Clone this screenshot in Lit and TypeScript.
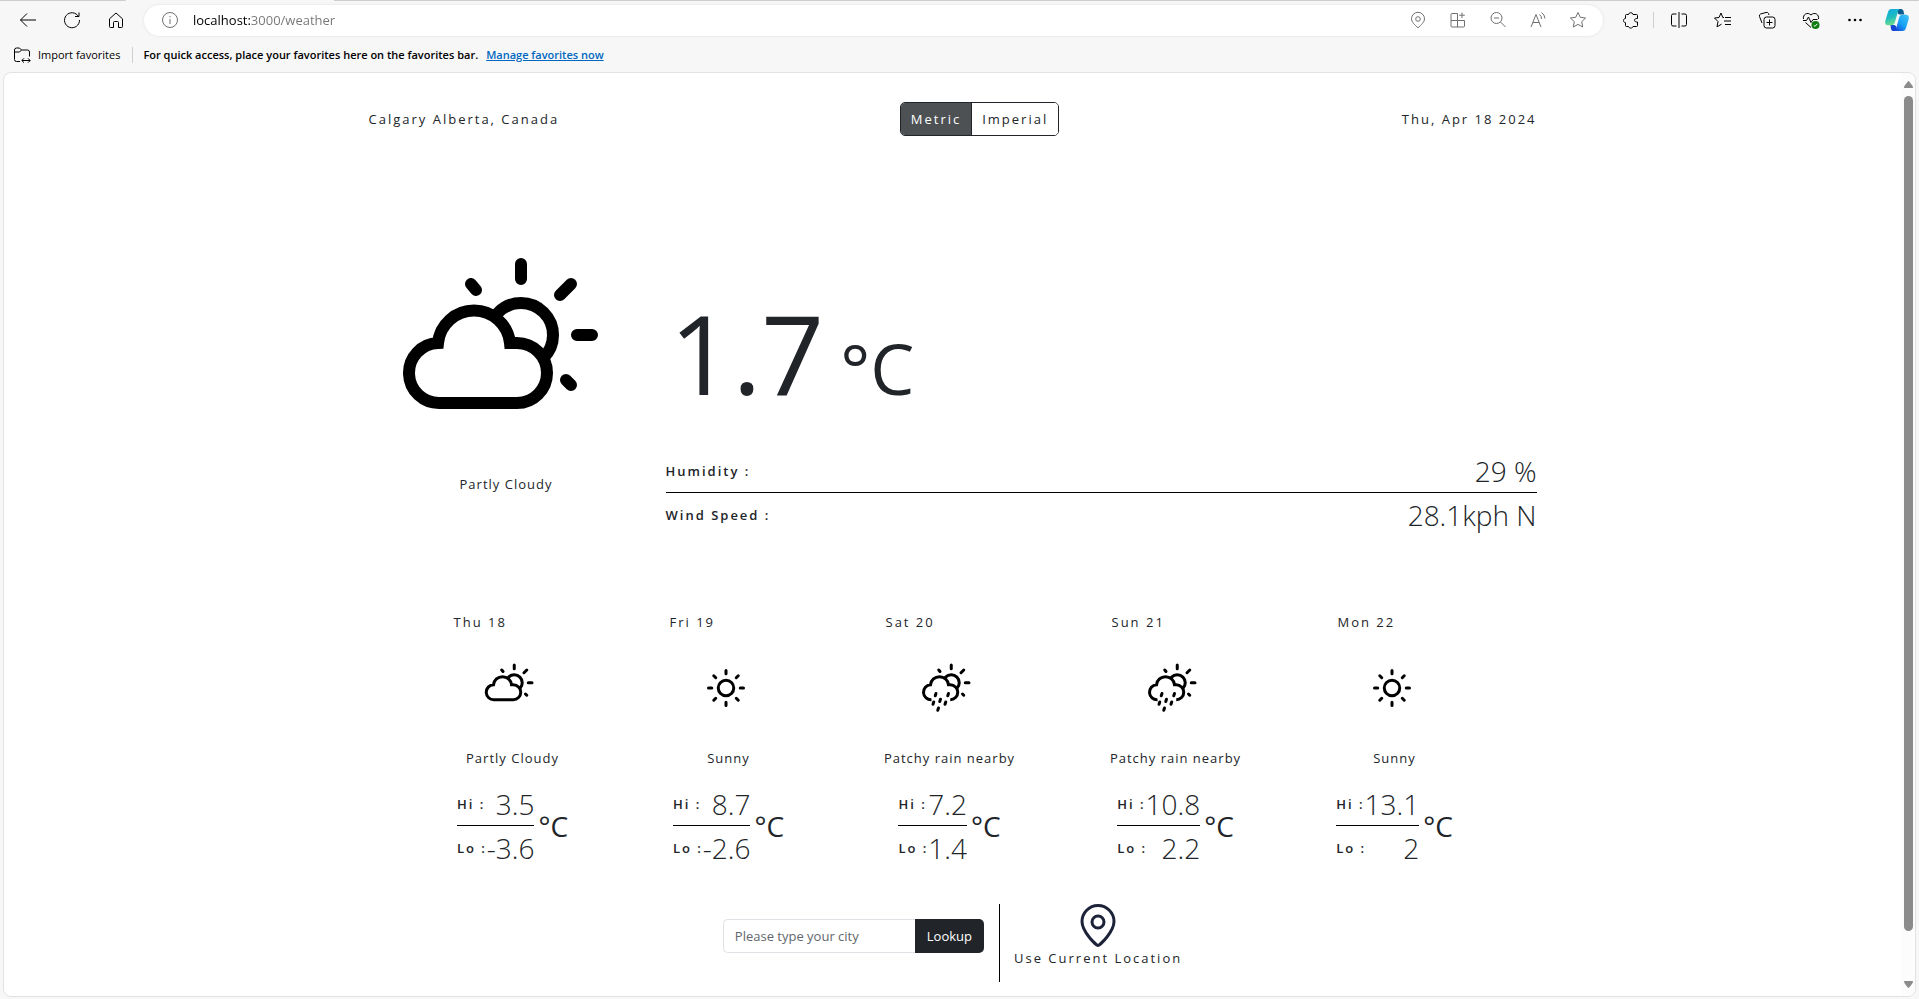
import { LitElement, html, css, svg } from "lit";
import { customElement, property, state } from "lit/decorators.js";
import { classMap } from "lit/directives/class-map.js";

type Condition = "partly" | "sunny" | "rain";

interface Day {
  label: string;
  icon: Condition;
  text: string;
  hi: number;
  lo: number;
}

const DAYS: Day[] = [
  { label: "Thu 18", icon: "partly", text: "Partly Cloudy", hi: 3.5, lo: -3.6 },
  { label: "Fri 19", icon: "sunny", text: "Sunny", hi: 8.7, lo: -2.6 },
  { label: "Sat 20", icon: "rain", text: "Patchy rain nearby", hi: 7.2, lo: 1.4 },
  { label: "Sun 21", icon: "rain", text: "Patchy rain nearby", hi: 10.8, lo: 2.2 },
  { label: "Mon 22", icon: "sunny", text: "Sunny", hi: 13.1, lo: 2 },
];

const toF = (c: number) => Math.round((c * 9) / 5 * 10 + 320) / 10;

/* Weather glyphs on a shared 256-unit grid. */
@customElement("weather-icon")
class WeatherIcon extends LitElement {
  @property() name: Condition = "sunny";

  static styles = css`
    :host { display: block; }
    svg { display: block; width: 100%; height: 100%; }
    .stroke { fill: none; stroke: #000; stroke-width: 12; }
    .cloud { fill: #fff; }
    .ray { stroke-linecap: round; }
  `;

  private sunBehind() {
    return svg`
      <circle class="stroke" cx="145" cy="107" r="32"></circle>
      <path class="stroke ray" d="M145 36V51M201 107H216M184 67L195 56M95 56L100 62M190 152L195 157"></path>`;
  }

  render() {
    if (this.name === "sunny") {
      return html`<svg viewBox="0 0 256 256" aria-hidden="true">
        <circle class="stroke" cx="128" cy="128" r="31"></circle>
        <path class="stroke ray" d="M128 58V71M128 185V198M58 128H71M185 128H198M79 79L87 87M177 79L169 87M79 177L87 169M177 177L169 169"></path>
      </svg>`;
    }
    if (this.name === "rain") {
      return html`<svg viewBox="0 0 256 256" aria-hidden="true">
        ${this.sunBehind()}
        <path class="stroke cloud" d="M66 175A30 30 0 0 1 62 115A36.2 36.2 0 0 1 134 115H141A30 30 0 0 1 141 175"></path>
        <path d="M72 164H132V190H72Z" fill="#fff"></path>
        <path class="stroke ray" d="M84 150L81 159M134 150L131 159M75 184L72 193M102 173L99 182M123 184L120 193M94 208L91 217"></path>
      </svg>`;
    }
    return html`<svg viewBox="0 0 256 256" aria-hidden="true">
      ${this.sunBehind()}
      <path class="stroke cloud" d="M64 175A30 30 0 0 1 62 115A36.2 36.2 0 0 1 134 115H141A30 30 0 0 1 141 175Z"></path>
    </svg>`;
  }
}

const line = (size: number, paths: unknown) =>
  html`<svg class="glyph" width=${size} height=${size} viewBox="0 0 20 20" aria-hidden="true">${paths}</svg>`;

const ICONS = {
  back: line(20, svg`<path d="M18 10H2.500M9 3.500L2.500 10L9 16.500"/>`),
  reload: line(20, svg`<path d="M16.500 6.500A7.500 7.500 0 1 0 17.500 10M17 2.500V6.500H13"/>`),
  home: line(20, svg`<path d="M3.500 8.800L10 3L16.500 8.800V16.500A1 1 0 0 1 15.500 17.500H12.500V12.500A1 1 0 0 0 11.500 11.500H8.500A1 1 0 0 0 7.500 12.500V17.500H4.500A1 1 0 0 1 3.500 16.500Z"/>`),
  info: line(20, svg`<circle cx="10" cy="10" r="7.500"/><path d="M10 9V14M10 6V7.300"/>`),
  pin: line(20, svg`<path d="M10 17.800C7 15.200 3.500 12 3.500 8.800A6.500 6.500 0 0 1 16.500 8.800C16.500 12 13 15.200 10 17.800Z"/><circle cx="10" cy="9" r="2.300"/>`),
  apps: line(20, svg`<path d="M9.500 3.500H4A1 1 0 0 0 3 4.500V16A1 1 0 0 0 4 17H15.500A1 1 0 0 0 16.500 16V10.500H3M9.500 3.500V17M14 2.500V8M11.200 5.200H16.800"/>`),
  zoomOut: line(20, svg`<circle cx="8.500" cy="8" r="5.500"/><path d="M12.500 12L17.500 17M6 8H11"/>`),
  read: line(20, svg`<path d="M3 17L8 4.500L13 17M4.800 12.500H11.200M11.500 4.500A5 5 0 0 1 13.500 9M13.500 2.500A8 8 0 0 1 17 8.500"/>`),
  star: line(20, svg`<path d="M10 2.500L12.300 7.300L17.600 8L13.700 11.700L14.700 17L10 14.400L5.300 17L6.300 11.700L2.400 8L7.700 7.300Z"/>`),
  puzzle: line(20, svg`<path d="M7.500 4.500A2.300 2.300 0 0 1 12 4.500H15.500A1 1 0 0 1 16.500 5.500V8.500C12.500 8 12.500 12.500 16.500 12V15.500A1 1 0 0 1 15.500 16.500H12C11.500 18.600 8 18.600 7.500 16.500H5.500A1 1 0 0 1 4.500 15.500V12.700C1.800 12.500 1.800 8.600 4.500 8.400V5.500A1 1 0 0 1 5.500 4.500Z"/>`),
  split: line(20, svg`<path d="M7.500 4H4A1.500 1.500 0 0 0 2.500 5.500V14.500A1.500 1.500 0 0 0 4 16H7.500M12.500 4H16A1.500 1.500 0 0 1 17.500 5.500V14.500A1.500 1.500 0 0 1 16 16H12.500M10 2V18"/>`),
  favorites: line(20, svg`<path d="M11 7.500H9.800L8 3L6 7.500L1.500 8L5 11.500L4 16.800L8.500 14.200M12 7.500H18M11 11H18M12 14.500H18"/>`),
  collections: line(20, svg`<path d="M5 13L2.500 6.500A2 2 0 0 1 3.500 4L9 2.500A2 2 0 0 1 11.500 3.500L12 5"/><rect x="7" y="7" width="11" height="11" rx="2.500"/><path d="M12.500 9.500V15.500M9.500 12.500H15.500"/>`),
  health: line(20, svg`<path d="M2.500 9C1.500 4.500 6.500 1.500 10 5C13.500 1.500 18.500 4.500 17.500 9M2 10.500H5.500L7.500 7L10 12.500L12 9.500H16.500M4.500 12.500L10 17.500"/><circle cx="14.500" cy="15" r="4" fill="#107c10" stroke="none"/><path d="M12.800 15.300L14 16.400L16.300 13.800" stroke="#fff"/>`),
  more: line(20, svg`<g fill="#000" stroke="none"><circle cx="4.500" cy="10" r="1.300"/><circle cx="10" cy="10" r="1.300"/><circle cx="15.500" cy="10" r="1.300"/></g>`),
  importFav: line(20, svg`<path d="M8 16.500H4.500A2 2 0 0 1 2.500 14.500V5A2 2 0 0 1 4.500 3H7.500L9.500 5H15.500A2 2 0 0 1 17.500 7V11.500M2.500 7H7.500L9.500 5M10 15.500H18M12 13.300L9.800 15.500L12 17.700M16 13.300L18.200 15.500L16 17.700"/>`),
};

const COPILOT = html`<svg width="24" height="24" viewBox="0 0 24 24" aria-hidden="true">
  <defs>
    <linearGradient id="cp-a" x1="0" y1="0" x2="0.300" y2="1"><stop offset="0" stop-color="#12a8e0"/><stop offset="0.550" stop-color="#1cbcc0"/><stop offset="1" stop-color="#6fdc8c"/></linearGradient>
    <linearGradient id="cp-b" x1="1" y1="0" x2="0.200" y2="1"><stop offset="0" stop-color="#3fc4f5"/><stop offset="0.600" stop-color="#189ff5"/><stop offset="1" stop-color="#1647d8"/></linearGradient>
  </defs>
  <path d="M12 1H16C17.500 1 18.200 2 18.600 3.500L19.300 6.500H15C13 6.500 12 5 12 1Z" fill="#0b5c8e"/>
  <path d="M12 23H8C6.500 23 6.300 22 6 20.500L5.400 17H9C11 17 12 19 12 23Z" fill="#1545d0"/>
  <path d="M6.500 1H15.500C13.600 1 13.200 2.500 12.700 4.300L10 14C9.400 16.200 8.500 17.300 6.500 17.300H3C0.800 17.300 -0.300 15.500 0.300 13L3 4C3.600 2 4.600 1 6.500 1Z" fill="url(#cp-a)"/>
  <path d="M17.500 23H8.500C10.400 23 10.800 21.500 11.300 19.700L14 10C14.600 7.800 15.500 6.700 17.500 6.700H21C23.200 6.700 24.300 8.500 23.700 11L21 20C20.400 22 19.400 23 17.500 23Z" fill="url(#cp-b)"/>
</svg>`;

@customElement("browser-bar")
class BrowserBar extends LitElement {
  static styles = css`
    :host { display: block; background: #f7f7f7; color: #000; }
    .edge { display: flex; height: 1px; }
    .edge i { background: #cdcdcd; width: 126px; border-radius: 0 0 4px 0; }
    .edge b { width: 208px; }
    .edge i:last-child { flex: 1; }
    .bar { display: flex; align-items: center; height: 38px; padding: 0 2px 0 6px; }
    .bar > button:last-child { width: 40px; }
    .bar > .rule { margin-right: 3px; }
    button { display: grid; place-items: center; border: 0; padding: 0; width: 44px; height: 30px; background: none; color: inherit; font: inherit; }
    .glyph { fill: none; stroke: currentColor; stroke-width: 1; }
    .address { flex: 1; display: flex; align-items: center; height: 31px; margin: 0 6px; padding: 0 5px 0 6px; border-radius: 16px; background: #fff; box-shadow: 0 0 3px #0000001a; color: #707070; }
    .address button { width: 40px; }
    .url { flex: 1; min-width: 0; border: 0; outline: 0; padding: 0 0 0 3px; font: 13px/20px "Open Sans", "Noto Sans", sans-serif; color: transparent; background: linear-gradient(90deg, #000 60px, #757575 60px); background-clip: text; -webkit-background-clip: text; }
    .rule { width: 1px; height: 16px; background: #cfcfcf; }
    .favs { display: flex; align-items: center; height: 32px; padding-left: 12px; font-size: 11px; line-height: 16px; }
    .favs button { display: flex; align-items: center; gap: 6px; width: auto; margin-right: 12px; }
    .favs p { margin: 0 8px 0 10px; font-weight: 600; }
    .favs a { font-weight: 600; color: #0067c0; }
  `;

  render() {
    const btn = (label: string, icon: unknown) => html`<button type="button" aria-label=${label}>${icon}</button>`;
    return html`
      <div class="edge"><i></i><b></b><i></i></div>
      <div class="bar">
        ${btn("Back", ICONS.back)}${btn("Refresh", ICONS.reload)}${btn("Home", ICONS.home)}
        <div class="address">
          ${btn("Site information", ICONS.info)}
          <input class="url" aria-label="Address" .value=${"localhost:3000/weather"} spellcheck="false" />
          ${btn("Location", ICONS.pin)}${btn("App available", ICONS.apps)}${btn("Zoom out", ICONS.zoomOut)}
          ${btn("Read aloud", ICONS.read)}${btn("Add to favorites", ICONS.star)}
        </div>
        ${btn("Extensions", ICONS.puzzle)}
        <span class="rule"></span>
        ${btn("Split screen", ICONS.split)}${btn("Favorites", ICONS.favorites)}${btn("Collections", ICONS.collections)}
        ${btn("Browser essentials", ICONS.health)}${btn("Settings and more", ICONS.more)}${btn("Copilot", COPILOT)}
      </div>
      <div class="favs">
        <button type="button">${ICONS.importFav}Import favorites</button>
        <span class="rule"></span>
        <p>For quick access, place your favorites here on the favorites bar.</p>
        <a href="#favorites">Manage favorites now</a>
      </div>
    `;
  }
}

@customElement("app-root")
class AppRoot extends LitElement {
  @state() private metric = true;

  static styles = css`
    :host { display: flex; flex-direction: column; min-height: 100vh; background: #f7f7f7; color: #212529; font: 13px/20px "Open Sans", "Noto Sans", sans-serif; }
    * { box-sizing: border-box; }
    .panel { flex: 1; display: flex; margin: 1px 3px 2px; border: 1px solid #e2e2e2; border-radius: 8px; background: #fff; overflow: hidden; }
    main { flex: 1; min-width: 0; letter-spacing: 2px; }
    .wrap { max-width: 1168px; margin: 0 auto; padding: 29px 0 14px; }
    .track { width: 14px; display: flex; flex-direction: column; align-items: center; padding: 8px 0; background: #fcfcfc; }
    .track svg { display: block; fill: #8b8b8b; }
    .thumb { width: 9px; flex: 1; margin: 8px 0 50px; border-radius: 5px; background: #8b8b8b; }

    .top { display: grid; grid-template-columns: 1fr auto 1fr; align-items: center; }
    .top time { text-align: right; }
    .toggle { display: flex; border: 1px solid #212529; border-radius: 5px; overflow: hidden; margin-left: 54px; }
    .toggle button { border: 0; padding: 6px 10px; background: #fff; color: inherit; font: inherit; letter-spacing: inherit; }
    .toggle button + button { border-left: 1px solid #212529; }
    .toggle .on { background: #4d5154; color: #fff; }

    .now { display: grid; grid-template-columns: 275px 1fr; column-gap: 22px; margin-top: 92px; }
    .sky { display: flex; flex-direction: column; align-items: center; }
    weather-icon { margin-right: 5px; }
    .sky weather-icon { width: 256px; height: 256px; margin-bottom: -10px; }
    .small { letter-spacing: 1px; white-space: nowrap; }
    .facts { padding-top: 60px; }
    .temp { display: flex; align-items: baseline; gap: 16px; margin-bottom: 17px; padding-left: 4px; font-size: 110px; line-height: 128px; letter-spacing: 0; }
    .temp span { font-size: 70px; }
    dl { margin: 0; }
    .row { display: flex; justify-content: space-between; align-items: center; height: 43px; }
    .row + .row { border-top: 1px solid #000; height: 44px; }
    dt { font-weight: 600; white-space: nowrap; }
    dd { margin: 0; font-size: 28px; font-weight: 300; letter-spacing: 0; }

    .days { display: grid; grid-template-columns: 118px 118px 128px 128px 114px; justify-content: center; column-gap: 98px; margin: 76px 0 0; padding: 0; list-style: none; }
    .day { display: flex; flex-direction: column; align-items: center; }
    .day h2 { align-self: flex-start; margin: 0 0 24px; font-size: 13px; font-weight: 400; }
    .day weather-icon { width: 64px; height: 64px; margin-bottom: 28px; }
    .range { display: flex; align-items: center; gap: 4px; margin-top: 14px; }
    .range span { font-size: 28px; letter-spacing: 0; }

    .find { display: flex; justify-content: center; margin-top: 35px; height: 78px; }
    form { display: flex; align-self: flex-start; margin: 15px 15px 0 0; height: 34px; letter-spacing: 0; }
    form input { width: 192px; border: 1px solid #dee2e6; border-right: 0; border-radius: 5px 0 0 5px; padding: 0 11px; font: inherit; color: inherit; outline: 0; }
    form input::placeholder { color: #62676b; }
    form button { border: 0; border-radius: 0 5px 5px 0; padding: 0 12px; background: #212529; color: #fff; font: inherit; }
    .here { display: flex; flex-direction: column; align-items: center; border: 0; border-left: 1px solid #000; padding: 0 0 0 14px; background: none; color: inherit; font: inherit; letter-spacing: inherit; }
    .here svg { width: 36px; height: 44px; fill: none; stroke: #1c2238; stroke-width: 3; stroke-linejoin: round; }
  `;

  private value(c: number) {
    return this.metric ? c : toF(c);
  }

  private unit() {
    return this.metric ? "°C" : "°F";
  }

  render() {
    return html`
      <browser-bar></browser-bar>
      <div class="panel">
        <main>
          <div class="wrap">
            <header class="top">
              <span>Calgary Alberta, Canada</span>
              <div class="toggle" role="group" aria-label="Units">
                <button type="button" class=${classMap({ on: this.metric })} aria-pressed=${this.metric} @click=${() => (this.metric = true)}>Metric</button>
                <button type="button" class=${classMap({ on: !this.metric })} aria-pressed=${!this.metric} @click=${() => (this.metric = false)}>Imperial</button>
              </div>
              <time datetime="2024-04-18">Thu, Apr 18 2024</time>
            </header>

            <section class="now">
              <div class="sky">
                <weather-icon name="partly"></weather-icon>
                <span class="small">Partly Cloudy</span>
              </div>
              <div class="facts">
                <div class="temp">${this.value(1.7)}<span>${this.unit()}</span></div>
                <dl>
                  <div class="row"><dt>Humidity :</dt><dd>29 %</dd></div>
                  <div class="row"><dt>Wind Speed :</dt><dd>${this.metric ? "28.1kph N" : "17.5mph N"}</dd></div>
                </dl>
              </div>
            </section>

            <ul class="days">
              ${DAYS.map(
                (d) => html`<li class="day">
                  <h2>${d.label}</h2>
                  <weather-icon name=${d.icon}></weather-icon>
                  <span class="small">${d.text}</span>
                  <div class="range">
                    <dl>
                      <div class="row"><dt>Hi :</dt><dd>${this.value(d.hi)}</dd></div>
                      <div class="row"><dt>Lo :</dt><dd>${this.value(d.lo)}</dd></div>
                    </dl>
                    <span>${this.unit()}</span>
                  </div>
                </li>`
              )}
            </ul>

            <section class="find">
              <form @submit=${(e: Event) => e.preventDefault()}>
                <input type="text" aria-label="City" placeholder="Please type your city" />
                <button type="submit">Lookup</button>
              </form>
              <button type="button" class="here">
                <svg viewBox="0 0 36 44" aria-hidden="true">
                  <path d="M18 41.500C16.500 41.500 2 28 2 17.500A16 16 0 0 1 34 17.500C34 28 19.500 41.500 18 41.500Z"></path>
                  <circle cx="18" cy="18" r="6"></circle>
                </svg>
                Use Current Location
              </button>
            </section>
          </div>
        </main>
        <div class="track" aria-hidden="true">
          <svg width="9" height="7" viewBox="0 0 9 7"><path d="M4.500 0C5 0 9 5 9 6S8.500 7 8 7H1C0.500 7 0 7 0 6S4 0 4.500 0Z"></path></svg>
          <div class="thumb"></div>
          <svg width="9" height="7" viewBox="0 0 9 7"><path d="M4.500 7C5 7 9 2 9 1S8.500 0 8 0H1C0.500 0 0 0 0 1S4 7 4.500 7Z"></path></svg>
        </div>
      </div>
    `;
  }
}
